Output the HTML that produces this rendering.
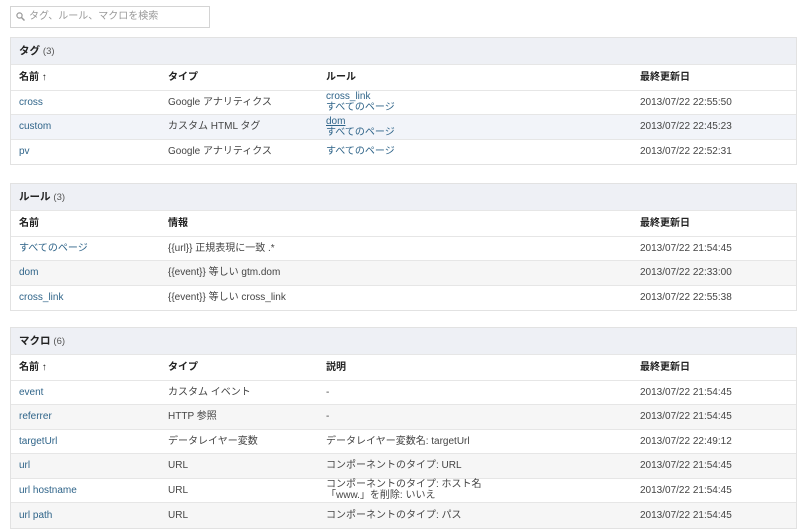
<!DOCTYPE html>
<html><head><meta charset="utf-8"><style>
*{margin:0;padding:0;box-sizing:border-box}
body{width:800px;height:531px;background:#fff;font-family:"Liberation Sans","Noto Sans CJK JP",sans-serif;font-size:10px;color:#444;position:relative;overflow:hidden}
.search{position:absolute;left:10px;top:6px;width:200px;height:22px;border:1px solid #d4d4d4;color:#999;font-size:10px;line-height:20px;padding-left:18px}
.search svg{position:absolute;left:5px;top:5px}
.panel{position:absolute;left:10px;width:787px;border:1px solid #e2e2e2}
.hd{background:#eef0f5;height:27px;line-height:27px;padding-left:8px;font-weight:bold;color:#222;font-size:10.5px;border-bottom:1px solid #e6e6e6}
.hd span{font-weight:normal;color:#555;font-size:9.5px}
.row{position:relative;height:24.5px;border-bottom:1px solid #e6e6e6}
.row:last-child{border-bottom:none}
.row.h{height:25.5px;font-weight:bold;color:#222}
.row.alt{background:#f6f6f6}
.row.blue{background:#f2f4f9}
.c{position:absolute;top:0;height:100%;display:flex;flex-direction:column;justify-content:center;line-height:11px}
.c1{left:8px}.c2{left:157px}.c3{left:315px}.c4{left:629px}
a{color:#2f6489;text-decoration:none}
a.u{text-decoration:underline}
</style></head><body>
<div class="search"><svg width="9" height="9" viewBox="0 0 9 9"><circle cx="3.5" cy="3.5" r="2.6" fill="none" stroke="#999" stroke-width="1.2"/><path d="M5.5 5.5L8.5 8.5" stroke="#999" stroke-width="1.5"/></svg>タグ、ルール、マクロを検索</div>

<div class="panel" style="top:37px">
<div class="hd">タグ <span>(3)</span></div>
<div class="row h"><div class="c c1">名前 ↑</div><div class="c c2">タイプ</div><div class="c c3">ルール</div><div class="c c4">最終更新日</div></div>
<div class="row"><div class="c c1"><a>cross</a></div><div class="c c2">Google アナリティクス</div><div class="c c3"><a>cross_link</a><a>すべてのページ</a></div><div class="c c4">2013/07/22 22:55:50</div></div>
<div class="row blue"><div class="c c1"><a>custom</a></div><div class="c c2">カスタム HTML タグ</div><div class="c c3"><a class="u">dom</a><a>すべてのページ</a></div><div class="c c4">2013/07/22 22:45:23</div></div>
<div class="row"><div class="c c1"><a>pv</a></div><div class="c c2">Google アナリティクス</div><div class="c c3"><a>すべてのページ</a></div><div class="c c4">2013/07/22 22:52:31</div></div>
</div>

<div class="panel" style="top:183px">
<div class="hd">ルール <span>(3)</span></div>
<div class="row h"><div class="c c1">名前</div><div class="c c2">情報</div><div class="c c4">最終更新日</div></div>
<div class="row"><div class="c c1"><a>すべてのページ</a></div><div class="c c2">{{url}} 正規表現に一致 .*</div><div class="c c4">2013/07/22 21:54:45</div></div>
<div class="row alt"><div class="c c1"><a>dom</a></div><div class="c c2">{{event}} 等しい gtm.dom</div><div class="c c4">2013/07/22 22:33:00</div></div>
<div class="row"><div class="c c1"><a>cross_link</a></div><div class="c c2">{{event}} 等しい cross_link</div><div class="c c4">2013/07/22 22:55:38</div></div>
</div>

<div class="panel" style="top:327px">
<div class="hd">マクロ <span>(6)</span></div>
<div class="row h"><div class="c c1">名前 ↑</div><div class="c c2">タイプ</div><div class="c c3">説明</div><div class="c c4">最終更新日</div></div>
<div class="row"><div class="c c1"><a>event</a></div><div class="c c2">カスタム イベント</div><div class="c c3">-</div><div class="c c4">2013/07/22 21:54:45</div></div>
<div class="row alt"><div class="c c1"><a>referrer</a></div><div class="c c2">HTTP 参照</div><div class="c c3">-</div><div class="c c4">2013/07/22 21:54:45</div></div>
<div class="row"><div class="c c1"><a>targetUrl</a></div><div class="c c2">データレイヤー変数</div><div class="c c3">データレイヤー変数名: targetUrl</div><div class="c c4">2013/07/22 22:49:12</div></div>
<div class="row alt"><div class="c c1"><a>url</a></div><div class="c c2">URL</div><div class="c c3">コンポーネントのタイプ: URL</div><div class="c c4">2013/07/22 21:54:45</div></div>
<div class="row"><div class="c c1"><a>url hostname</a></div><div class="c c2">URL</div><div class="c c3"><div>コンポーネントのタイプ: ホスト名</div><div>「www.」を削除: いいえ</div></div><div class="c c4">2013/07/22 21:54:45</div></div>
<div class="row alt"><div class="c c1"><a>url path</a></div><div class="c c2">URL</div><div class="c c3">コンポーネントのタイプ: パス</div><div class="c c4">2013/07/22 21:54:45</div></div>
</div>
</body></html>
